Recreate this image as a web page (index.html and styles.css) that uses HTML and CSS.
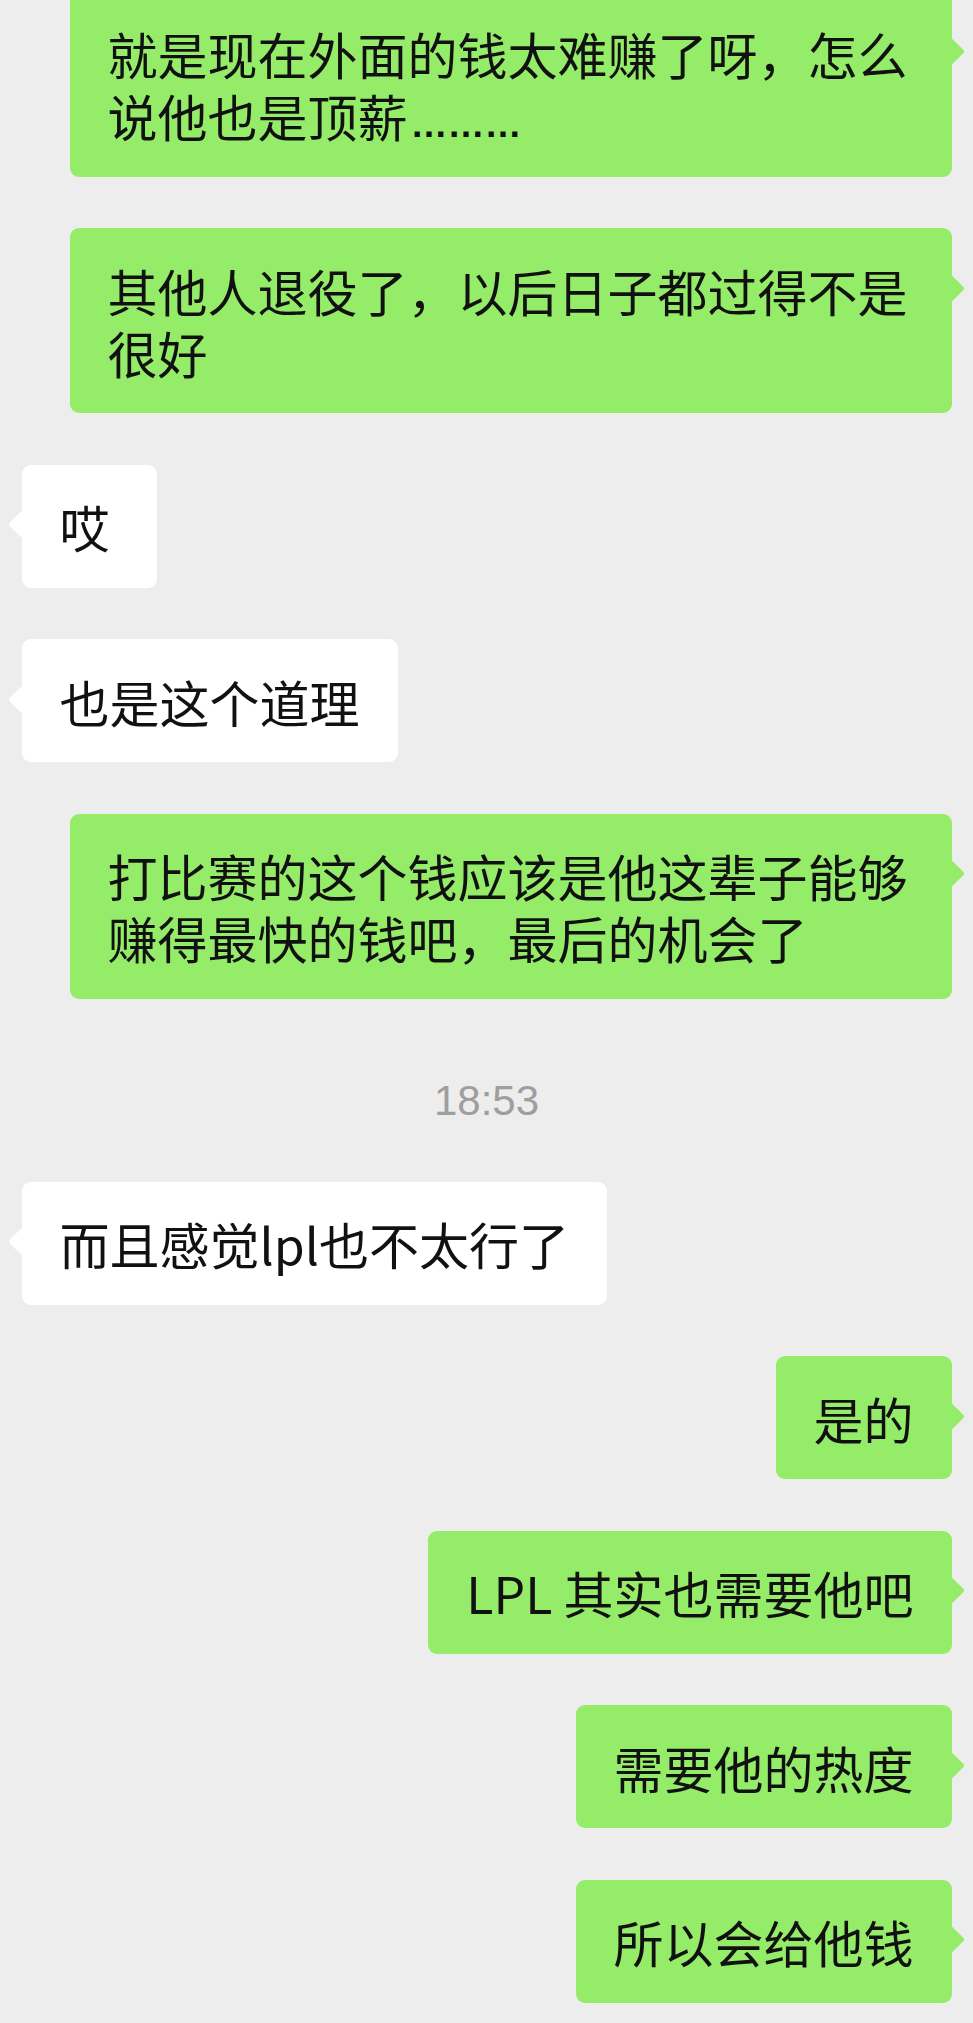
FILE: index.html
```html
<!DOCTYPE html>
<html lang="zh-CN">
<head>
    <meta charset="UTF-8">
    <meta name="viewport" content="width=device-width, initial-scale=1.0">
    <title>聊天</title>
    <link rel="stylesheet" href="styles.css">
</head>
<body>
    <div class="chat">
        <div class="row mine"><div class="bubble">就是现在外面的钱太难赚了呀，怎么说他也是顶薪<span class="dots">………</span></div></div>
        <div class="row mine"><div class="bubble">其他人退役了，以后日子都过得不是很好</div></div>
        <div class="row theirs"><div class="bubble">哎</div></div>
        <div class="row theirs"><div class="bubble">也是这个道理</div></div>
        <div class="row mine"><div class="bubble">打比赛的这个钱应该是他这辈子能够赚得最快的钱吧，最后的机会了</div></div>

        <div class="time">18:53</div>

        <div class="row theirs"><div class="bubble">而且感觉lpl也不太行了</div></div>
        <div class="row mine"><div class="bubble">是的</div></div>
        <div class="row mine"><div class="bubble">LPL 其实也需要他吧</div></div>
        <div class="row mine"><div class="bubble">需要他的热度</div></div>
        <div class="row mine"><div class="bubble">所以会给他钱</div></div>
    </div>
</body>
</html>
```

FILE: styles.css
```css
html, body {
    margin: 0;
    background-color: #ededed;
}

body {
    font-family: "Noto Sans CJK SC", "Noto Sans", sans-serif;
    overflow: hidden;
}

.chat {
    display: flex;
    flex-direction: column;
    gap: 51.5px;
    margin-top: -8.3px;
}

.row {
    display: flex;
    padding: 0 21.5px;
}

.row.mine {
    justify-content: flex-end;
}

.bubble {
    position: relative;
    box-sizing: border-box;
    max-width: 882px;
    min-width: 135px;
    padding: 30.5px 38px;
    font-size: 50px;
    line-height: 62px;
    color: #111;
    background: #ffffff;
    border-radius: 9px;
}

.mine .bubble {
    background: #95ec69;
}

/* little tail pointing at the sender */
.bubble::after {
    content: "";
    position: absolute;
    top: 50.5px;
    width: 19px;
    height: 19px;
    background: inherit;
    border-radius: 2px;
    transform: rotate(45deg);
}

.mine .bubble::after {
    right: -9.5px;
}

.theirs .bubble::after {
    left: -9.5px;
}

/* baseline dots like the phone font, not the centred CJK ones */
.dots {
    margin-left: 3px;
    font-family: "Liberation Sans", Arial, sans-serif;
    font-size: 37px;
    font-weight: bold;
    line-height: 0;
}

.time {
    padding-top: 22px;
    line-height: 58px;
    text-align: center;
    font-family: "Liberation Sans", Arial, sans-serif;
    font-size: 42px;
    color: #9e9e9e;
}
```
